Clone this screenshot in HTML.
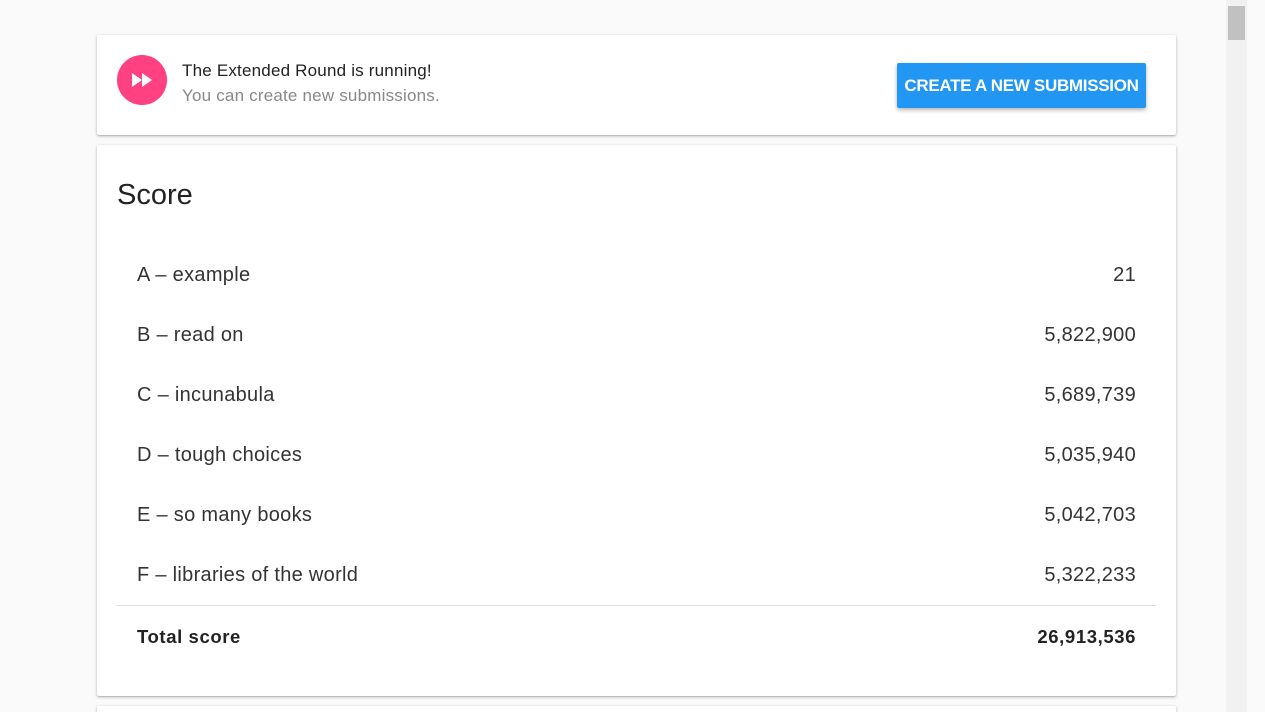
<!DOCTYPE html>
<html style="overflow:hidden;height:712px"><head><style>
body{margin:0;width:1265px;height:712px;background:#fafafa;font-family:"Liberation Sans",sans-serif;overflow:hidden;position:relative}
.card{position:absolute;left:97px;width:1079px;background:#fff;border-radius:2px;box-shadow:0 1px 3px rgba(0,0,0,.25),0 1px 1px rgba(0,0,0,.12)}
.row{position:absolute;left:40px;right:40px;font-size:20px;color:#333;height:24px;letter-spacing:0.3px}
.row span.v{position:absolute;right:0}
</style></head><body>
<div class="card" style="top:35px;height:100px">
 <div style="position:absolute;left:20px;top:20px;width:50px;height:50px;border-radius:50%;background:#ff4081">
  <svg width="50" height="50" viewBox="0 0 50 50"><path d="M15 18v14l10-7zM25 18v14l10-7z" fill="#fff"/></svg>
 </div>
 <div style="position:absolute;left:85px;top:26px;font-size:17px;color:#222;letter-spacing:0.2px">The Extended Round is running!</div>
 <div style="position:absolute;left:85px;top:51px;font-size:17px;color:#888;letter-spacing:0.2px">You can create new submissions.</div>
 <div style="position:absolute;left:800px;top:28px;width:249px;height:45px;background:#2196f3;border-radius:2px;box-shadow:0 2px 4px rgba(0,0,0,.3);color:#fff;font-weight:bold;font-size:17px;line-height:45px;text-align:center;letter-spacing:-0.3px">CREATE A NEW SUBMISSION</div>
</div>
<div class="card" style="top:145px;height:551px">
 <div style="position:absolute;left:20px;top:34px;font-size:29px;color:#222">Score</div>
 <div class="row" style="top:119px">A – example<span class="v">21</span></div>
 <div class="row" style="top:179px">B – read on<span class="v">5,822,900</span></div>
 <div class="row" style="top:239px">C – incunabula<span class="v">5,689,739</span></div>
 <div class="row" style="top:299px">D – tough choices<span class="v">5,035,940</span></div>
 <div class="row" style="top:359px">E – so many books<span class="v">5,042,703</span></div>
 <div class="row" style="top:419px">F – libraries of the world<span class="v">5,322,233</span></div>
 <div style="position:absolute;left:20px;right:20px;top:460px;border-top:1px solid #ddd"></div>
 <div class="row" style="top:481px;font-weight:bold;color:#222;font-size:18.5px;letter-spacing:0.6px">Total score<span class="v">26,913,536</span></div>
</div>
<div class="card" style="top:706px;height:6px;border-radius:2px 2px 0 0"></div>
<div style="position:absolute;left:1226px;top:0;width:21px;height:712px;background:#f1f1f1"></div>
<div style="position:absolute;left:1228px;top:6px;width:17px;height:34px;background:#c1c1c1"></div>
</body></html>
